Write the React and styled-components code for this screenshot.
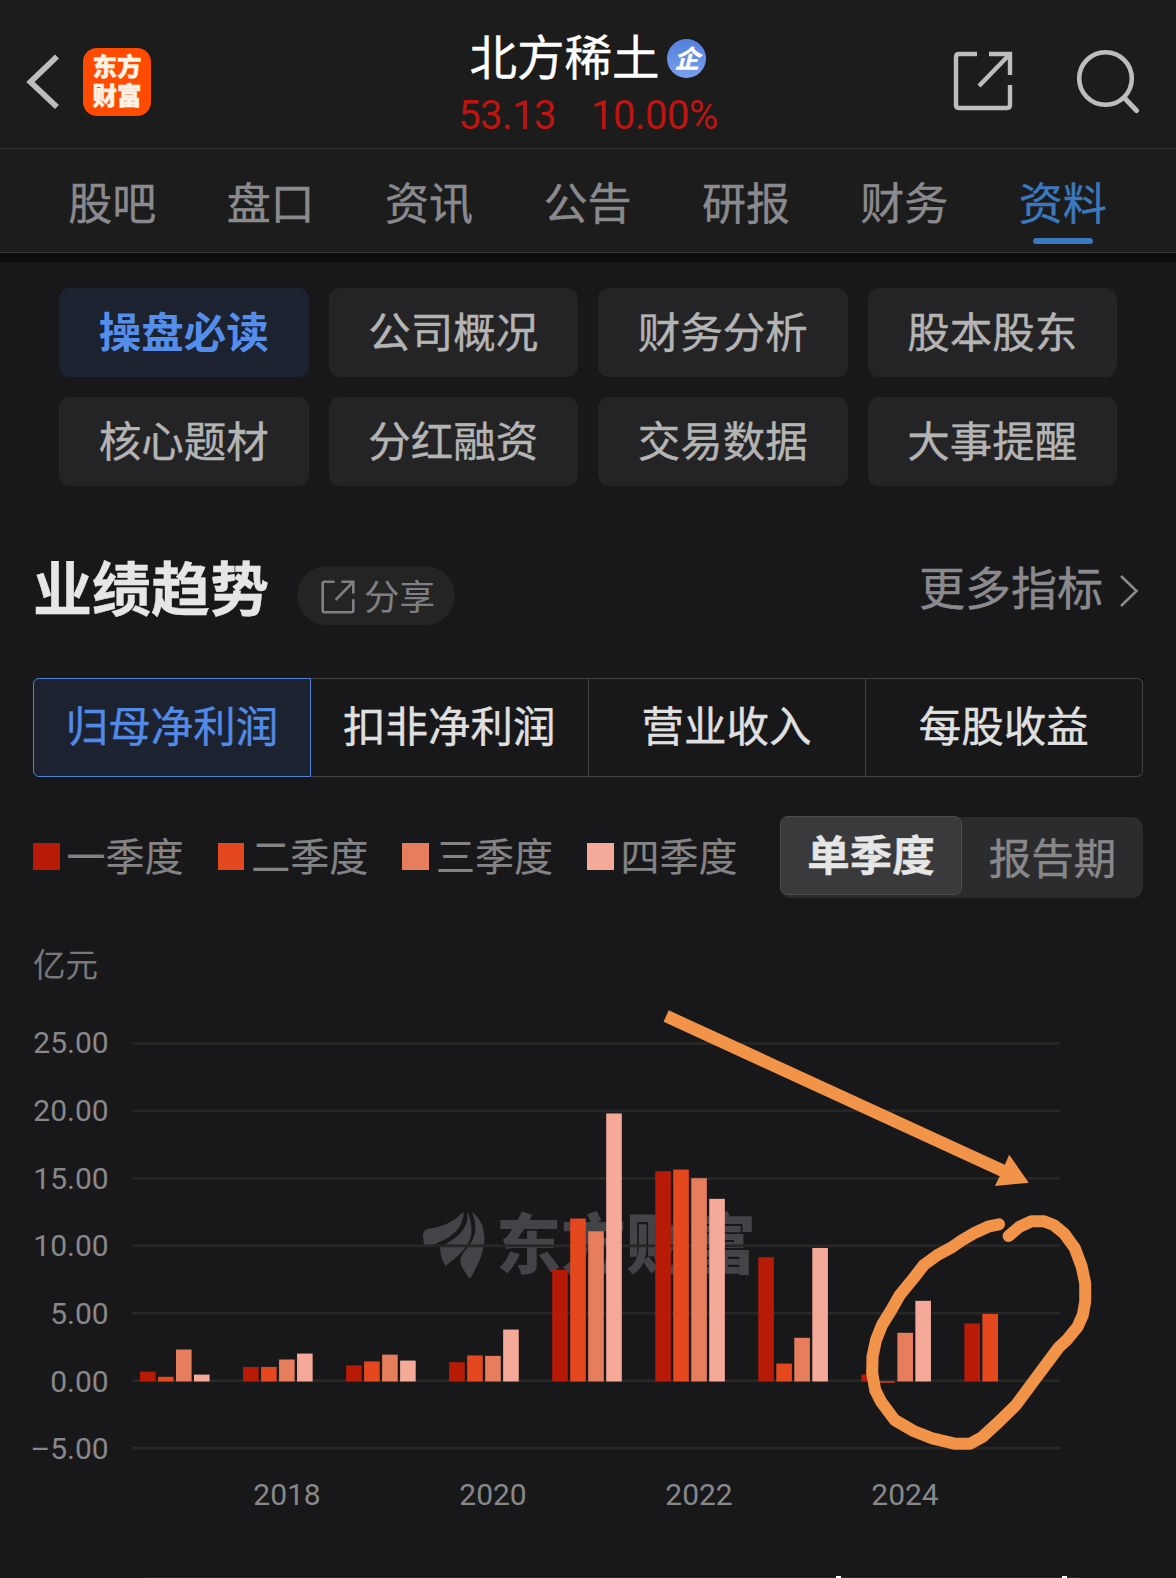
import styled, { createGlobalStyle } from "styled-components";

const TABS = ["股吧", "盘口", "资讯", "公告", "研报", "财务", "资料"];

const MENU = [
  "操盘必读", "公司概况", "财务分析", "股本股东",
  "核心题材", "分红融资", "交易数据", "大事提醒",
];

const METRICS = ["归母净利润", "扣非净利润", "营业收入", "每股收益"];

const QUARTERS = [
  { name: "一季度", color: "#b71b08" },
  { name: "二季度", color: "#e5471e" },
  { name: "三季度", color: "#e67d5d" },
  { name: "四季度", color: "#f5aa99" },
];

// net profit per quarter, one row per year starting at 2017
const PROFITS = [
  [0.73, 0.35, 2.37, 0.51],
  [1.08, 1.08, 1.63, 2.07],
  [1.19, 1.49, 1.99, 1.55],
  [1.43, 1.93, 1.9, 3.85],
  [8.28, 12.08, 11.14, 19.87],
  [15.59, 15.71, 15.07, 13.54],
  [9.21, 1.33, 3.24, 9.9],
  [0.52, -0.1, 3.61, 5.98],
  [4.3, 5.01],
];

const TICKS = [25, 20, 15, 10, 5, 0, -5];
const UNIT = 13.49;
const ZERO_Y = 391;

const ShareIcon = ({ size, width, color }) => (
  <svg width={size} height={size} viewBox="0 0 60 60" fill="none" stroke={color} strokeWidth={width}>
    <path d="M24 3H6Q3 3 3 6V54Q3 57 6 57H54Q57 57 57 54V34" />
    <path d="M36 3H57V24" />
    <path d="M56 4L26 35" />
  </svg>
);

const ProfitChart = () => (
  <svg width="1176" height="530" viewBox="0 0 1176 530">
    <g fill="#444347">
      <path d="M463.5 221.5C452 234 440 237 427 239Q423 240.500 423 246L424 255H432C452 248 464 238 463.500 221.5Z" />
      <path d="M467 221C470 236 460 247 440 257Q440 267 445.500 276C461 264 472 254 471.500 240Q471.500 229 467 221Z" />
      <path d="M472 222C478 238 476 249 464 262Q459 268 461 275Q465 283 470 289C478 275 484.500 262 484.500 247Q484 231 472 222Z" />
    </g>
    <Watermark x="496" y="278">东方财富</Watermark>

    {TICKS.map((tick) => (
      <g key={tick}>
        <rect x="132.5" y={ZERO_Y - tick * UNIT - 1.7} width="927.5" height="2.8" fill="#272728" />
        <AxisText x="108.7" y={ZERO_Y - tick * 13.53 + 10.5} textAnchor="end">
          {tick < 0 ? `–${Math.abs(tick).toFixed(2)}` : tick.toFixed(2)}
        </AxisText>
      </g>
    ))}

    {PROFITS.map((year, i) =>
      year.map((value, q) => (
        <rect
          key={`${i}-${q}`}
          x={140 + i * 103.05 + q * 18}
          y={value > 0 ? ZERO_Y + 0.5 - value * UNIT : ZERO_Y + 0.3}
          width="15.6"
          height={Math.abs(value) * UNIT}
          fill={QUARTERS[q].color}
        />
      ))
    )}

    {[2018, 2020, 2022, 2024].map((year, i) => (
      <AxisText key={year} x={287 + i * 206} y="514.5" textAnchor="middle">{year}</AxisText>
    ))}

    {/* hand-drawn marks */}
    <path
      fill="#f2934a"
      d="M668.7 20.3L1004.8 174.7L1009.2 164.7L1028.7 192.7L994.9 196L999.7 186.3L663.6 31.7Z"
    />
    <path
      fill="none"
      stroke="#f2934a"
      strokeWidth="12"
      strokeLinecap="round"
      strokeLinejoin="round"
      d="M999 234.3L988 236.7L975 242.7L961.4 250.7L952.8 256.7L937.5 265L923.8 275L913.5 288.3L899.8 305L891.3 320L882 335L876 350L872.5 366.7L872.2 383.3L875.2 400L881 411.7L894.7 430L913.5 441L932.3 448.3L954.5 453.7L970 453.7L982 447.3L997.3 433.3L1016 415L1033.2 391.7L1046.9 373.3L1058.8 357.3L1067.4 349.3L1077.6 336.7L1082.8 325L1085.2 311.7L1085.2 293.3L1081.7 276.7L1074.9 258.3L1064 243.3L1053.7 235L1044.1 231.3L1031.5 231.3L1019.5 236.7L1008.6 246"
    />
  </svg>
);

const App = () => {
  return (
    <Page>
      <GlobalStyle />
      <Header>
        <HeaderLeft>
          <svg width="36" height="56" viewBox="0 0 36 56" fill="none" stroke="#bdbdbd" strokeWidth="5.8">
            <path d="M31 2.500L4.500 28L31 53" />
          </svg>
          <AppLogo>
            <span>东方</span>
            <span>财富</span>
          </AppLogo>
        </HeaderLeft>
        <HeaderCenter>
          <StockName>
            北方稀土
            <Badge>企</Badge>
          </StockName>
          <Quote>
            <span>53.13</span>
            <span>10.00%</span>
          </Quote>
        </HeaderCenter>
        <HeaderRight>
          <ShareIcon size={60} width={4.4} color="#bdbdbd" />
          <svg width="66" height="66" viewBox="0 0 66 66" fill="none" stroke="#bdbdbd" strokeWidth="4.6">
            <circle cx="30.5" cy="30.5" r="26.3" />
            <path d="M49.5 50L61.500 62.500" strokeWidth="5" strokeLinecap="round" />
          </svg>
        </HeaderRight>
      </Header>

      <Tabs>
        {TABS.map((tab) => (
          <Tab key={tab} $active={tab === "资料"}>{tab}</Tab>
        ))}
      </Tabs>
      <Divider />

      <Menu>
        {MENU.map((item, i) => (
          <MenuItem key={item} $active={i === 0}>{item}</MenuItem>
        ))}
      </Menu>

      <SectionHead>
        <SectionTitle>业绩趋势</SectionTitle>
        <ShareButton>
          <ShareIcon size={34} width={4.6} color="#808084" />
          <span>分享</span>
        </ShareButton>
        <MoreLink>
          <span>更多指标</span>
          <svg width="20" height="34" viewBox="0 0 20 34" fill="none" stroke="#8a8a8e" strokeWidth="2.6">
            <path d="M2 2L17.5 17L2 32" />
          </svg>
        </MoreLink>
      </SectionHead>

      <Metrics>
        {METRICS.map((metric, i) => (
          <Metric key={metric} $active={i === 0}>{metric}</Metric>
        ))}
      </Metrics>

      <LegendRow>
        {QUARTERS.map((quarter) => (
          <LegendItem key={quarter.name}>
            <Swatch $color={quarter.color} />
            <span>{quarter.name}</span>
          </LegendItem>
        ))}
        <Toggle>
          <ToggleActive>单季度</ToggleActive>
          <ToggleItem>报告期</ToggleItem>
        </Toggle>
      </LegendRow>

      <Unit>亿元</Unit>
      <ProfitChart />

      <NextCard>
        <Notch />
        <Notch />
      </NextCard>
    </Page>
  );
};

const GlobalStyle = createGlobalStyle`
  * {
    box-sizing: border-box;
  }

  body {
    margin: 0;
    background: #18181a;
  }

  svg {
    display: block;
    flex-shrink: 0;
  }
`;

const Page = styled.div`
  display: flex;
  flex-direction: column;
  width: 1176px;
  height: 1578px;
  overflow: hidden;
  background: #18181a;
  font-family: "Noto Sans CJK SC", sans-serif;
  white-space: nowrap;
  -webkit-text-stroke: 0.4px currentColor;
`;

const Header = styled.header`
  display: grid;
  grid-template-columns: 1fr auto 1fr;
  height: 149px;
  flex-shrink: 0;
  background: #1c1c1c;
  border-bottom: 1px solid #343535;
`;

const HeaderLeft = styled.div`
  display: flex;
  align-items: center;
  gap: 21px;
  padding: 15px 0 0 26px;
`;

const AppLogo = styled.div`
  display: flex;
  flex-direction: column;
  align-items: center;
  justify-content: center;
  width: 68px;
  height: 68px;
  padding-bottom: 4px;
  border-radius: 14px;
  background: #ff4a02;
  color: #fff3e6;
  font-size: 24.5px;
  font-weight: 900;
  line-height: 29px;
`;

const HeaderCenter = styled.div`
  display: flex;
  flex-direction: column;
  align-items: center;
  padding-top: 25px;
`;

const StockName = styled.div`
  display: flex;
  align-items: center;
  gap: 8px;
  height: 60px;
  color: #fff;
  font-size: 47.5px;
  line-height: 60px;
`;

const Badge = styled.span`
  width: 39px;
  height: 39px;
  margin-top: 6px;
  border-radius: 50%;
  background: linear-gradient(#5380dd, #7aa0ec);
  color: #fff;
  font-size: 25px;
  font-weight: 700;
  font-style: italic;
  line-height: 36px;
  text-align: center;
`;

const Quote = styled.div`
  display: flex;
  gap: 35px;
  margin-top: 6px;
  color: #bd1512;
  font-family: Roboto, sans-serif;
  font-size: 40px;
  letter-spacing: -0.5px;
  line-height: 50px;
  -webkit-text-stroke: 0;
`;

const HeaderRight = styled.div`
  display: flex;
  align-items: center;
  justify-content: flex-end;
  gap: 62px;
  padding: 14px 35px 0 0;
`;

const Tabs = styled.nav`
  display: flex;
  height: 104px;
  flex-shrink: 0;
  padding: 0 34px 0 33px;
  background: #1c1c1c;
  border-bottom: 1px solid #343535;
`;

const Tab = styled.div`
  display: flex;
  flex: 1;
  flex-direction: column;
  align-items: center;
  padding-top: 22px;
  color: ${({ $active }) => ($active ? "#3c78bd" : "#8a8a8e")};
  font-size: 44px;
  line-height: 60px;

  &::after {
    content: "";
    width: 60px;
    height: 6px;
    margin-top: 7px;
    border-radius: 3px;
    background: ${({ $active }) => ($active ? "#3a78bf" : "transparent")};
  }
`;

const Divider = styled.div`
  height: 9px;
  flex-shrink: 0;
  background: #0c0c0c;
`;

const Menu = styled.div`
  display: grid;
  grid-template-columns: repeat(4, 1fr);
  grid-auto-rows: 89px;
  gap: 20px;
  margin: 26px 59px 0;
`;

const MenuItem = styled.div`
  border-radius: 11px;
  background: ${({ $active }) => ($active ? "#1c2230" : "#242426")};
  color: ${({ $active }) => ($active ? "#558eea" : "#b4b4b4")};
  font-size: 42.5px;
  font-weight: ${({ $active }) => ($active ? 700 : 400)};
  line-height: 84px;
  text-align: center;
  -webkit-text-stroke: ${({ $active }) => ($active ? "0" : "0.4px")};
`;

const SectionHead = styled.div`
  display: flex;
  align-items: center;
  height: 84px;
  margin-top: 60px;
  padding: 0 37px 0 33px;
`;

const SectionTitle = styled.h2`
  margin: 0 0 4px;
  color: #e6e6e6;
  font-size: 59px;
  font-weight: 700;
  line-height: 84px;
`;

const ShareButton = styled.div`
  display: flex;
  align-items: center;
  gap: 9px;
  width: 158px;
  height: 59px;
  margin: 15px 0 0 28px;
  padding-left: 24px;
  border-radius: 30px;
  background: #242425;
  color: #808084;
  font-size: 35.5px;
  -webkit-text-stroke: 0;

  svg {
    margin-top: 3px;
  }

  span {
    line-height: 55px;
    margin-bottom: 3px;
  }
`;

const MoreLink = styled.div`
  display: flex;
  align-items: center;
  gap: 16px;
  margin-left: auto;
  color: #8a8a8e;
  font-size: 46px;
  line-height: 76px;

  span {
    margin-bottom: 6px;
  }

  svg {
    margin-top: 5px;
  }
`;

const Metrics = styled.div`
  display: flex;
  height: 99px;
  flex-shrink: 0;
  margin: 48px 33px 0;
`;

const Metric = styled.div`
  flex: 1;
  border: 1.5px solid ${({ $active }) => ($active ? "#4f83d3" : "#424344")};
  border-left-width: ${({ $active }) => ($active ? "1.5px" : "0")};
  background: ${({ $active }) => ($active ? "#1c2230" : "transparent")};
  color: ${({ $active }) => ($active ? "#528ae6" : "#e0e0e0")};
  font-size: 42.5px;
  line-height: 90px;
  text-align: center;

  &:first-child {
    border-radius: 6px 0 0 6px;
  }

  &:last-child {
    border-radius: 0 6px 6px 0;
  }
`;

const LegendRow = styled.div`
  display: flex;
  height: 82px;
  flex-shrink: 0;
  margin: 39px 33px 0;
`;

const LegendItem = styled.div`
  display: flex;
  align-items: center;
  gap: 7px;
  width: 184.7px;
  color: #848486;
  font-size: 39px;
  -webkit-text-stroke: 0.2px;

  span {
    line-height: 76px;
    margin-bottom: 6px;
  }
`;

const Swatch = styled.i`
  width: 26.5px;
  height: 27px;
  margin-bottom: 2px;
  background: ${({ $color }) => $color};
`;

const Toggle = styled.div`
  display: flex;
  width: 363px;
  height: 81px;
  margin: 1px 0 0 auto;
  border-radius: 11px;
  background: #2c2c2e;
  font-size: 42.5px;
`;

const ToggleActive = styled.div`
  width: 182px;
  height: 79px;
  margin-top: -1px;
  border: 1px solid #4d4d4f;
  border-radius: 8px;
  background: #3a3a3c;
  color: #e6e6e6;
  font-weight: 700;
  line-height: 71px;
  text-align: center;
`;

const ToggleItem = styled.div`
  flex: 1;
  color: #88888b;
  line-height: 77px;
  text-align: center;
`;

const Unit = styled.div`
  height: 50px;
  flex-shrink: 0;
  margin: 38px 0 4px 33px;
  color: #77777c;
  font-size: 32.5px;
  line-height: 54px;
  -webkit-text-stroke: 0;
`;

const AxisText = styled.text`
  fill: #88888b;
  font-family: Roboto, sans-serif;
  font-size: 30px;
  -webkit-text-stroke: 0;
`;

const Watermark = styled.text`
  fill: #444347;
  font-size: 65px;
  font-weight: 900;
  -webkit-text-stroke: 0;
`;

const NextCard = styled.div`
  display: flex;
  justify-content: flex-end;
  gap: 221px;
  height: 2px;
  margin: 56px 96px 0 146px;
  padding-right: 13px;
  border-bottom: 1px solid #2c2829;
`;

const Notch = styled.i`
  width: 5px;
  height: 2px;
  background: #fff;
`;

export default App;
